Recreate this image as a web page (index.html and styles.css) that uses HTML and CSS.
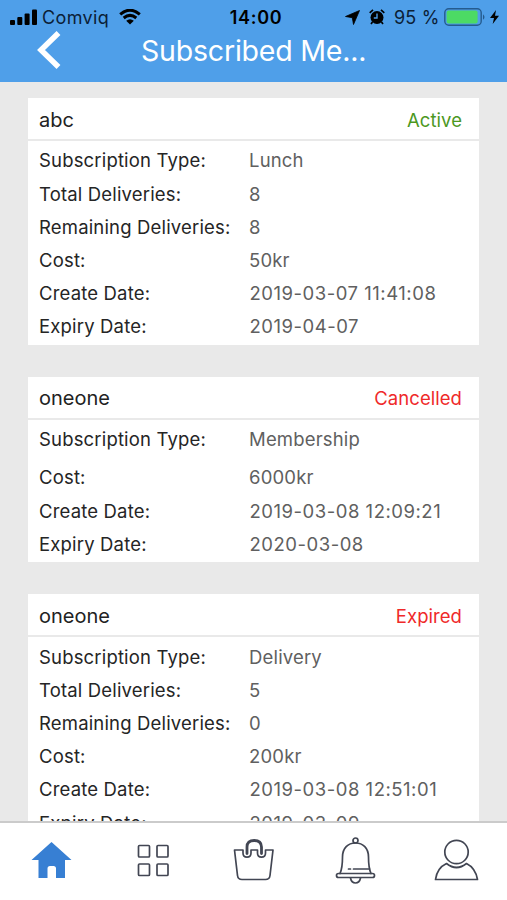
FILE: index.html
```
<!DOCTYPE html>
<html lang="en">
<head>
<meta charset="utf-8">
<title>Subscribed Meals</title>
<link rel="stylesheet" href="styles.css">
</head>
<body>
<header class="header">
  <div class="status">
    <div class="status-left">
      <svg width="27" height="16" viewBox="0 0 27 16"><rect x="0" y="11" width="5" height="5" rx="1"/><rect x="7.3" y="8" width="5" height="8" rx="1"/><rect x="14.6" y="4.5" width="5" height="11.5" rx="1"/><rect x="22" y="0.5" width="5" height="15.5" rx="1"/></svg>
      <span class="carrier">Comviq</span>
      <svg class="wifi" width="22" height="16" viewBox="0 0 22 16"><path d="M1.2 5.4Q11-3 20.8 5.4M4.7 9Q11 3.8 17.3 9" fill="none" stroke="#000" stroke-width="3"/><path d="M7.2 11.7Q11 8.6 14.8 11.7L11 15.6Z"/></svg>
    </div>
    <span class="time">14:00</span>
    <div class="status-right">
      <svg width="15" height="15" viewBox="0 0 15 15"><path d="M14.5.5 8.5 14.5 7.3 7.7.5 6.5Z" stroke="#000" stroke-width=".8" stroke-linejoin="round"/></svg>
      <svg class="alarm" width="16" height="16" viewBox="0 0 16 16"><circle cx="8" cy="8.5" r="6.5"/><path d="M.7 3.8 4 .8M15.3 3.8 12 .8M3.5 13 2 15M12.5 13 14 15" stroke="#000" stroke-width="1.7"/><path d="M8 4.5V9H4.8" fill="none" stroke="#4f9fe9" stroke-width="1.4"/></svg>
      <span class="percent">95 %</span>
      <svg class="battery" width="42" height="18" viewBox="0 0 42 18"><rect x=".8" y=".8" width="36.4" height="16.4" rx="4" fill="none" stroke="#255b8e" stroke-width="1.4"/><rect x="2.6" y="2.6" width="31" height="12.8" rx="2" fill="#4cda64"/><path d="M39 6.2Q42 9 39 11.8Z" fill="#255b8e"/></svg>
      <svg class="bolt" width="9" height="14" viewBox="0 0 9 14"><path d="M6 0 0 8H4L2.7 14 9 5.7H5Z"/></svg>
    </div>
  </div>
  <div class="title-bar">
    <svg class="back" width="25" height="40" viewBox="0 0 25 40"><path d="M22.500 3 5 20 22.500 37" fill="none" stroke="#fff" stroke-width="5.5"/></svg>
    <h1 class="title">Subscribed Me...</h1>
  </div>
</header>
<main class="list">
  <section class="card">
    <div class="card-head"><h2 class="name">abc</h2><span class="state active">Active</span></div>
    <dl class="details">
      <dt>Subscription Type:</dt><dd>Lunch</dd>
      <dt>Total Deliveries:</dt><dd>8</dd>
      <dt>Remaining Deliveries:</dt><dd>8</dd>
      <dt>Cost:</dt><dd>50kr</dd>
      <dt>Create Date:</dt><dd class="date">2019-03-07 11:41:08</dd>
      <dt>Expiry Date:</dt><dd class="date">2019-04-07</dd>
    </dl>
  </section>
  <section class="card">
    <div class="card-head"><h2 class="name">oneone</h2><span class="state inactive">Cancelled</span></div>
    <dl class="details membership">
      <dt>Subscription Type:</dt><dd>Membership</dd>
      <dt>Cost:</dt><dd>6000kr</dd>
      <dt>Create Date:</dt><dd class="date">2019-03-08 12:09:21</dd>
      <dt>Expiry Date:</dt><dd class="date">2020-03-08</dd>
    </dl>
  </section>
  <section class="card">
    <div class="card-head"><h2 class="name">oneone</h2><span class="state inactive">Expired</span></div>
    <dl class="details">
      <dt>Subscription Type:</dt><dd>Delivery</dd>
      <dt>Total Deliveries:</dt><dd>5</dd>
      <dt>Remaining Deliveries:</dt><dd>0</dd>
      <dt>Cost:</dt><dd>200kr</dd>
      <dt>Create Date:</dt><dd class="date">2019-03-08 12:51:01</dd>
      <dt>Expiry Date:</dt><dd class="date">2019-03-09</dd>
    </dl>
  </section>
</main>
<nav class="tabs">
  <a class="tab"><svg width="50" height="50" viewBox="0 0 50 50"><path d="M25.5 5 45.500 23H39V41H30V31.500Q30 29 27.500 29H24Q21.500 29 21.500 31.500V41H12.500V23H5.500Z" fill="#377fd3"/></svg></a>
  <a class="tab"><svg width="50" height="50" viewBox="0 0 50 50"><g class="line"><rect x="11.500" y="8.500" width="11" height="11.500" rx="1"/><rect x="30" y="8.500" width="11" height="11.500" rx="1"/><rect x="11.500" y="27" width="11" height="11.500" rx="1"/><rect x="30" y="27" width="11" height="11.500" rx="1"/></g></svg></a>
  <a class="tab"><svg width="50" height="50" viewBox="0 0 50 50"><g class="line"><path d="M15 13H6.500L9.500 38.500Q10 42.500 14 42.500H37.500Q41.500 42.500 42 38.500L45 13H37.500V16C37.500 21.500 29.500 21.500 29.500 16V13H23V16C23 21.500 15 21.500 15 16Z"/><path class="handle" d="M19 16.500V10Q19 3.500 26.200 3.500T33.500 10V16.500"/></g></svg></a>
  <a class="tab"><svg width="50" height="50" viewBox="0 0 50 50"><g class="line"><circle cx="25.500" cy="3.500" r="2.500"/><path d="M10 36.500C12.500 31 12.500 26 12.500 20C12.500 11 18 6 25.500 6S38.500 11 38.500 20C38.500 26 38.500 31 41 36.500"/><rect x="6.500" y="36.500" width="38" height="4" rx="2"/><path d="M20.500 41Q21.500 46 25.500 46T30.500 41M18.500 32H20.500M23.500 32H39.500"/></g></svg></a>
  <a class="tab"><svg width="50" height="50" viewBox="0 0 50 50"><g class="line"><circle cx="25.500" cy="15" r="11.700"/><path d="M15.500 26.500Q6 31 4.500 42.500H46.500Q44.500 31 35.500 26.500Q25.500 34.500 15.500 26.500Z"/></g></svg></a>
</nav>
</body>
</html>
```
FILE: styles.css
```
* { box-sizing: border-box; }
body {
  margin: 0;
  width: 507px;
  height: 900px;
  display: flex;
  flex-direction: column;
  overflow: hidden;
  background: #e9e9e9;
  font-family: Inter, "Liberation Sans", sans-serif;
}
svg { display: block; flex: none; }
.header { height: 82px; flex: none; background: #4f9fe9; }
.status {
  display: grid;
  grid-template-columns: 1fr auto 1fr;
  align-items: center;
  height: 34px;
  padding: 0 8px 0 10px;
  color: #0b2036;
  font-size: 18px;
}
.status-left, .status-right { display: flex; align-items: center; }
.status-right { justify-content: flex-end; }
.carrier { margin-left: 5px; width: 68px; letter-spacing: .35px; }
.wifi { margin-left: 9px; }
.time { margin-left: 3px; color: #000; font-weight: 600; letter-spacing: .7px; }
.alarm { margin-left: 9px; }
.percent { width: 46px; margin-left: 9px; letter-spacing: .2px; white-space: nowrap; }
.battery { margin-left: 4px; }
.bolt { margin-left: 4px; }
.title-bar { display: flex; align-items: center; height: 33px; padding-left: 36px; }
.back { margin-top: -2px; }
.title { margin: 1px 0 0 80px; color: #fff; font-size: 28.5px; font-weight: 400; letter-spacing: -.2px; line-height: 32px; }
.list { flex: 1; min-height: 0; overflow: hidden; display: flex; flex-direction: column; gap: 32px; padding: 16px 28px 0; }
.card { flex: none; background: #fff; }
.card-head { display: flex; justify-content: space-between; align-items: center; height: 43px; padding: 2px 17px 0 11px; border-bottom: 2px solid #e9e9e9; }
.name { margin: 0; color: #222; font-size: 20px; font-weight: 400; }
.state { font-size: 18.5px; letter-spacing: .05px; }
.active { color: #4c981f; }
.inactive { color: #ef2929; }
.details { display: grid; grid-template-columns: 210px 1fr; grid-auto-rows: 33.2px; align-items: center; margin: 0; padding: 2.8px 0 2px 11px; font-size: 18.5px; letter-spacing: .17px; white-space: nowrap; }
.membership { grid-template-rows: 33.2px 38px; }
.membership dt:nth-of-type(2), .membership dd:nth-of-type(2) { padding-top: 5px; }
dt { color: #252525; }
dd { margin: 0; color: #606060; }
.date { padding-left: .5px; letter-spacing: .52px; }
.tabs { display: grid; grid-template-columns: repeat(5, 1fr); align-items: center; flex: none; height: 79px; border-top: 2px solid #cbcbcb; background: #fff; }
.tab { display: flex; justify-content: center; }
.line { fill: none; stroke: #424653; stroke-width: 1.7; stroke-linecap: round; stroke-linejoin: round; }
.handle { stroke-width: 2.8; }
```
